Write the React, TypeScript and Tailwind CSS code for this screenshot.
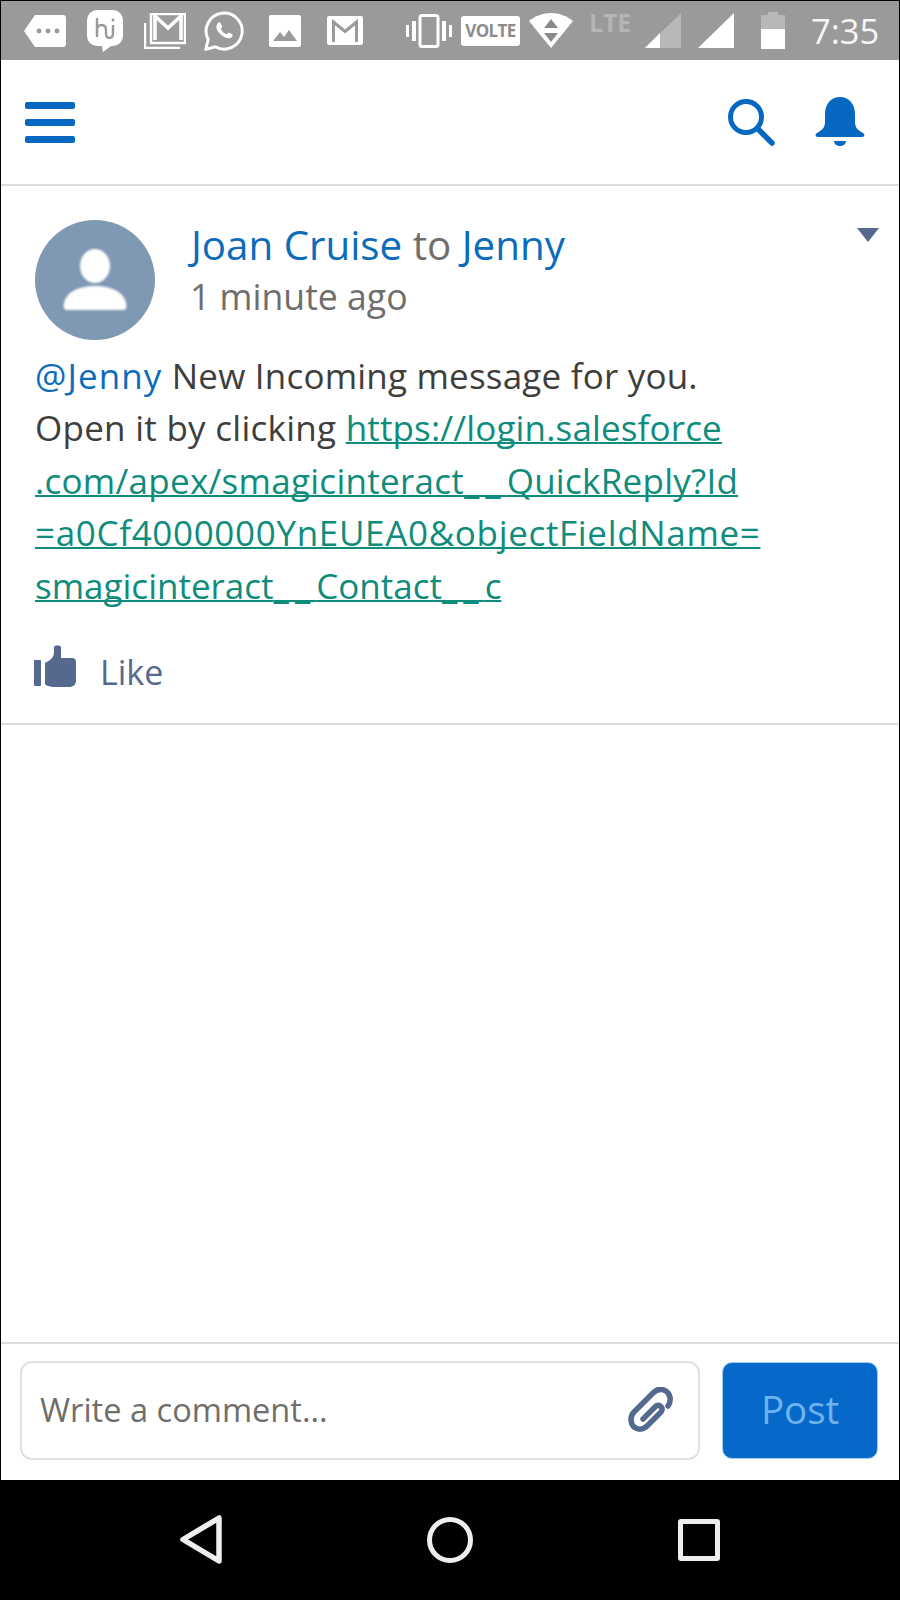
import React from 'react';

const font = "font-['Open_Sans',sans-serif]";
const link = 'text-[#0f8c7c] underline decoration-2 underline-offset-[1px] [text-decoration-skip-ink:none]';

const StatusBar = () => (
  <div className={`h-[60px] shrink-0 bg-[#9a9a9a] flex items-center text-white pl-[23px] border-t border-black ${font}`}>
    <svg width="42" height="32" viewBox="0 0 42 32" className="shrink-0">
      <path d="M11 0H39a3 3 0 0 1 3 3V29a3 3 0 0 1-3 3H11L0 16Z" fill="#fff" />
      <circle cx="15" cy="16" r="2.4" fill="#9a9a9a" />
      <circle cx="24" cy="16" r="2.4" fill="#9a9a9a" />
      <circle cx="33" cy="16" r="2.4" fill="#9a9a9a" />
    </svg>
    <svg width="36" height="42" viewBox="0 0 36 42" className="shrink-0 ml-[21px]">
      <path d="M10 0H26a10 10 0 0 1 10 10V26a10 10 0 0 1-10 10H24L16 42 15 36H10A10 10 0 0 1 0 26V10A10 10 0 0 1 10 0Z" fill="#fff" />
      <path d="M10 8V27M10 20q0-5 4.500-5t4.500 5v3q0 5 3.500 5t3.500-5V15M26 8.500V11.500" fill="none" stroke="#9a9a9a" strokeWidth="2.4" />
    </svg>
    <svg width="42" height="36" viewBox="0 0 42 36" className="shrink-0 ml-[21px]">
      <path d="M1 10V35H36" fill="none" stroke="#fff" strokeWidth="2.5" />
      <path d="M7 1H41V30H7Z" fill="none" stroke="#fff" strokeWidth="2.5" />
      <path d="M11 27V3L24 15 37 3V27" fill="none" stroke="#fff" strokeWidth="3.5" />
    </svg>
    <svg width="42" height="42" viewBox="0 0 24 24" className="shrink-0 ml-[17px]">
      <path d="M1.500 22.500l1.500-5.600A10.300 10.300 0 1 1 7 21Z" fill="none" stroke="#fff" strokeWidth="1.700" strokeLinejoin="round" />
      <path d="M8.600 7.400c.3-.4 1-.5 1.300-.1l1 1.800c.2.3 0 .7-.5 1.200-.2.2-.2.4-.1.7.7 1.300 1.600 2.200 2.900 2.800.3.1.5.1.7-.2.5-.6.8-.8 1.100-.6l1.700.9c.4.3.3 1-.1 1.500-1 1-2.600 1-4.500 0-2-1-3.500-2.600-4.200-4.500-.5-1.500-.2-2.700.7-3.500Z" fill="#fff" />
    </svg>
    <svg width="32" height="32" viewBox="0 0 32 32" className="shrink-0 ml-[24px]">
      <path d="M2 0H30a2 2 0 0 1 2 2V30a2 2 0 0 1-2 2H2a2 2 0 0 1-2-2V2A2 2 0 0 1 2 0Z" fill="#fff" />
      <path d="M4 26L11 17 15 22 20 15 28 26Z" fill="#9a9a9a" />
    </svg>
    <svg width="36" height="29" viewBox="0 0 36 29" className="shrink-0 ml-[26px]">
      <path d="M2 0H34a2 2 0 0 1 2 2V27a2 2 0 0 1-2 2H2a2 2 0 0 1-2-2V2A2 2 0 0 1 2 0Z" fill="#fff" />
      <path d="M6.500 26V6L18 15.500 29.500 6V26" fill="none" stroke="#9a9a9a" strokeWidth="3" />
    </svg>
    <svg width="46" height="34" viewBox="0 0 46 34" className="shrink-0 ml-[43px]">
      <rect x="0" y="11" width="3" height="12" fill="#fff" />
      <rect x="6" y="7" width="4" height="20" fill="#fff" />
      <rect x="14" y="1.500" width="18" height="31" rx="2" fill="none" stroke="#fff" strokeWidth="3" />
      <rect x="36" y="7" width="4" height="20" fill="#fff" />
      <rect x="43" y="11" width="3" height="12" fill="#fff" />
    </svg>
    <div className="ml-[9px] w-[59px] h-[30px] shrink-0 rounded-[3px] bg-white text-[#8c8c8c] font-bold text-[17px] leading-[30px] text-center tracking-[-0.6px]">VOLTE</div>
    <svg width="44" height="35" viewBox="0 0 44 35" className="shrink-0 ml-[9px]">
      <path d="M22 0C30 0 38 3 44 8L22 35 0 8C6 3 14 0 22 0Z" fill="#fff" />
      <path d="M22 6L29 15H15ZM22 29L15 20H29Z" fill="#8a8a8a" />
    </svg>
    <div className="ml-[16px] w-[44px] shrink-0 self-start mt-[8px] text-[#b5b5b5] font-bold text-[25px] leading-[26px] tracking-[-0.2px]">LTE</div>
    <svg width="36" height="35" viewBox="0 0 36 35" className="shrink-0 ml-[12px]">
      <path d="M36 0V35H0Z" fill="#b8b8b8" />
      <path d="M15 20V35H0Z" fill="#fff" />
    </svg>
    <svg width="36" height="35" viewBox="0 0 36 35" className="shrink-0 ml-[17px]">
      <path d="M36 0V35H0Z" fill="#fff" />
    </svg>
    <svg width="24" height="37" viewBox="0 0 24 37" className="shrink-0 ml-[27px]">
      <path d="M7 0H17V3H24V37H0V3H7Z" fill="#b8b8b8" />
      <rect x="0" y="17" width="24" height="20" fill="#fff" />
    </svg>
    <div className="ml-[26px] text-[34.500px] leading-[40px] font-medium text-[#f5f5f5]">7:35</div>
  </div>
);

const NavBar = () => (
  <div className="h-[126px] shrink-0 flex items-center justify-between pl-[24px] pr-[34px] border-b-2 border-[#dcdcdc]">
    <div className="flex flex-col gap-[10px] w-[50px]">
      <div className="h-[7px] rounded-[2px] bg-[#0668c0]" />
      <div className="h-[7px] rounded-[2px] bg-[#0668c0]" />
      <div className="h-[7px] rounded-[2px] bg-[#0668c0]" />
    </div>
    <div className="flex items-center gap-[40px]">
      <svg width="48" height="48" viewBox="0 0 48 48">
        <circle cx="19" cy="19" r="15.500" fill="none" stroke="#0668c0" strokeWidth="5" />
        <path d="M31 31L45 45" stroke="#0668c0" strokeWidth="5.500" strokeLinecap="round" />
      </svg>
      <svg width="50" height="50" viewBox="0 0 50 50">
        <path d="M25 0C34 0 40 7 40 17V25C40 31 43 33 48 36 50 37 50 40 47 40H3C0 40 0 37 2 36 7 33 10 31 10 25V17C10 7 16 0 25 0Z" fill="#0668c0" />
        <path d="M19 44H31C31 47 28 49 25 49S19 47 19 44Z" fill="#0668c0" />
      </svg>
    </div>
  </div>
);

const Post = () => (
  <div className={`h-[539px] shrink-0 border-b-2 border-[#dcdcdc] pl-[34px] pr-[20px] relative ${font}`}>
    <div className="flex pt-[34px] h-[164px]">
      <div className="w-[120px] h-[120px] rounded-full bg-[#7f98b3] shrink-0 flex items-center justify-center">
        <svg width="64" height="62" viewBox="0 0 64 62" className="blur-[1px]">
          <ellipse cx="32" cy="17" rx="15" ry="17" fill="#fff" />
          <path d="M4 61C1 61 0 59 1 54 3 44 14 37 32 37S61 44 63 54C64 59 63 61 60 61Z" fill="#fff" />
        </svg>
      </div>
      <div className="ml-[36px]">
        <div className="text-[40.300px] leading-[50px] text-[#706e6b] whitespace-nowrap">
          <span className="text-[#0b6cbb]">Joan Cruise</span> to <span className="text-[#0b6cbb]">Jenny</span>
        </div>
        <div className="text-[35.600px] leading-[52px] -ml-[1px] text-[#706e6b] whitespace-nowrap">1 minute ago</div>
      </div>
    </div>
    {/* triangle menu */}
    <svg width="22" height="14" viewBox="0 0 22 14" className="absolute right-[20px] top-[42px]">
      <path d="M0 0H22L11 14Z" fill="#54698d" />
    </svg>
    <div className="text-[35px] leading-[52.400px] text-[#3e3e3c]">
      <div className="whitespace-nowrap tracking-[0.2px]"><span className="text-[#0b6cbb] tracking-[1.100px]">@Jenny</span> New Incoming message for you.</div>
      <div className="whitespace-nowrap tracking-[0.27px]">Open it by clicking <span className={`${link} tracking-[0.15px]`}>https://login.salesforce</span></div>
      <div className={`whitespace-nowrap tracking-[0.27px] ${link}`}>.com/apex/smagicinteract<span className="tracking-[6px]">__</span>QuickReply?Id</div>
      <div className={`whitespace-nowrap tracking-[0.67px] ${link}`}>=a0Cf4000000YnEUEA0&amp;objectFieldName=</div>
      <div className={`whitespace-nowrap ${link}`}>smagicinteract<span className="tracking-[6px]">__</span>Contact<span className="tracking-[6px]">__</span>c</div>
    </div>
    <div className="flex items-center mt-[27px] -ml-[2px]">
      <svg width="44" height="42" viewBox="0 0 44 42">
        <path d="M2 15H7a1 1 0 0 1 1 1V40a1 1 0 0 1-1 1H2a2 2 0 0 1-1-1V16a1 1 0 0 1 1-1Z" fill="#54698d" />
        <path d="M12 18C18 15 21 12 21 7V2C21 0 28 0 28 2V13H39C43 13 43 16 43 19V35C43 40 40 42 36 42H22C17 42 12 40 12 39Z" fill="#54698d" />
      </svg>
      <span className="ml-[23px] mt-[12px] text-[34px] leading-[42px] text-[#54698d]">Like</span>
    </div>
  </div>
);

const CommentBar = () => (
  <div className={`h-[138px] shrink-0 border-t-2 border-[#dcdcdc] flex items-center pl-[19px] pr-[21px] pb-[4px] ${font}`}>
    <div className="h-[99px] w-[681px] rounded-[12px] border-2 border-[#dde1e6] flex items-center justify-between pl-[18px] pr-[24px]">
      <span className="text-[32.600px] text-[#706e6b]">Write a comment...</span>
      <svg width="46" height="46" viewBox="0 0 46 46">
        <path d="M40 19C44 13 42 7 38 4 33 1 29 2 25 6L6 25C2 29 2 36 6 40 10 43 15 43 19 39L33 25C36 21 32 17 28 19L15 32" fill="none" stroke="#54698d" strokeWidth="5.500" strokeLinecap="round" strokeLinejoin="round" />
      </svg>
    </div>
    <div className="ml-[22px] w-[156px] h-[97px] rounded-[10px] bg-[#0668c8] border border-[#9fd0f5] flex items-center justify-center text-[38.500px] text-[#6fb3ee]">Post</div>
  </div>
);

const SystemNav = () => (
  <div className="h-[120px] shrink-0 bg-black flex items-center">
    <svg width="44" height="50" viewBox="0 0 44 50" className="ml-[179px]">
      <path d="M40 3V46L4 24.500Z" fill="none" stroke="#eeeeee" strokeWidth="5.500" strokeLinejoin="round" />
    </svg>
    <svg width="48" height="48" viewBox="0 0 48 48" className="ml-[203px]">
      <circle cx="24" cy="24" r="20.500" fill="none" stroke="#eeeeee" strokeWidth="5" />
    </svg>
    <div className="ml-[204px] w-[42px] h-[42px] rounded-[3px] border-[5px] border-[#eeeeee]" />
  </div>
);

export default function App() {
  return (
    <div className="w-[900px] h-[1600px] flex flex-col bg-white overflow-hidden">
      <div className="flex-1 flex flex-col border-l border-r border-black min-h-0">
        <StatusBar />
        <NavBar />
        <Post />
        <div className="flex-1" />
        <CommentBar />
      </div>
      <SystemNav />
    </div>
  );
}
